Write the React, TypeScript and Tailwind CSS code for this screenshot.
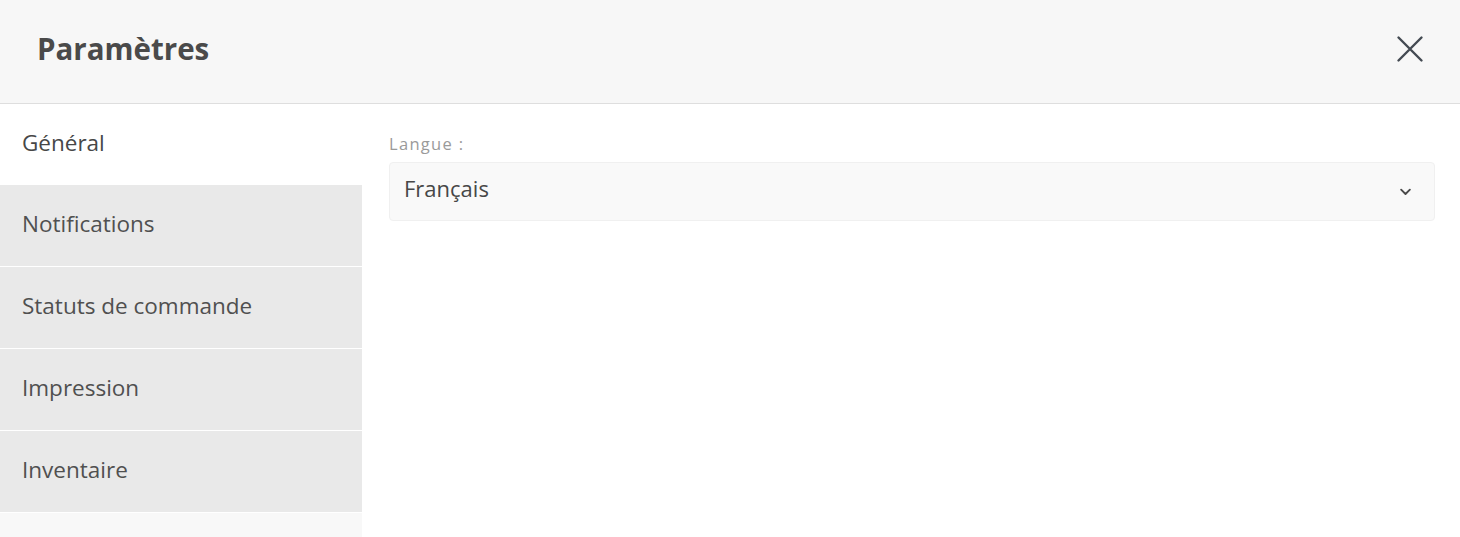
import React from "react";

const font = { fontFamily: '"Open Sans", "Noto Sans", sans-serif' };

export default function App() {
  const items = ["Notifications", "Statuts de commande", "Impression", "Inventaire"];
  return (
    <div className="w-[1460px] h-[537px] bg-white flex flex-col overflow-hidden text-[#4d4d4d]" style={font}>
      <div className="h-[104px] shrink-0 bg-[#f7f7f7] border-b border-[#dedede] flex items-center justify-between pl-[37px] pr-[36px]">
        <h1 className="text-[29.5px] font-bold text-[#4a4a4a] leading-[36px] -mt-[5px]">Paramètres</h1>
        <svg className="-mt-[6px]" width="28" height="28" viewBox="0 0 28 28" fill="none" stroke="#434a52" strokeWidth="2.4" strokeLinecap="round">
          <path d="M2.5 2.5L25.5 25.5M25.5 2.5L2.5 25.5" />
        </svg>
      </div>
      <div className="flex flex-1 min-h-0">
        <div className="w-[362px] shrink-0 flex flex-col bg-[#f8f8f8]">
          <div className="h-[81px] bg-white flex items-center pl-[22px] text-[22.5px] text-[#474747]">
            <span className="-mt-[3px]">Général</span>
          </div>
          {items.map((t) => (
            <div key={t} className="h-[82px] bg-[#e9e9e9] border-b border-white flex items-center pl-[22px] text-[22.5px] text-[#505050]">
              <span className="-mt-[3px]">{t}</span>
            </div>
          ))}
        </div>
        <div className="flex-1 pl-[27px] pr-[25px] pt-[30px]">
          <div className="text-[16.5px] tracking-[1.3px] text-[#9a9a9a] leading-[20px]">Langue :</div>
          <div className="mt-[8px] h-[59px] bg-[#f9f9f9] border border-[#f0f0f0] rounded-[4px] flex items-start justify-between pl-[14px] pr-[21px] pt-[10px]">
            <span className="text-[22px] text-[#474747] leading-[30px]">Français</span>
            <svg className="mt-[11px]" width="15" height="15" viewBox="0 0 24 24" fill="none" stroke="#4a4a4a" strokeWidth="3" strokeLinecap="round" strokeLinejoin="round">
              <path d="M5 9l7 7 7-7" />
            </svg>
          </div>
        </div>
      </div>
    </div>
  );
}
